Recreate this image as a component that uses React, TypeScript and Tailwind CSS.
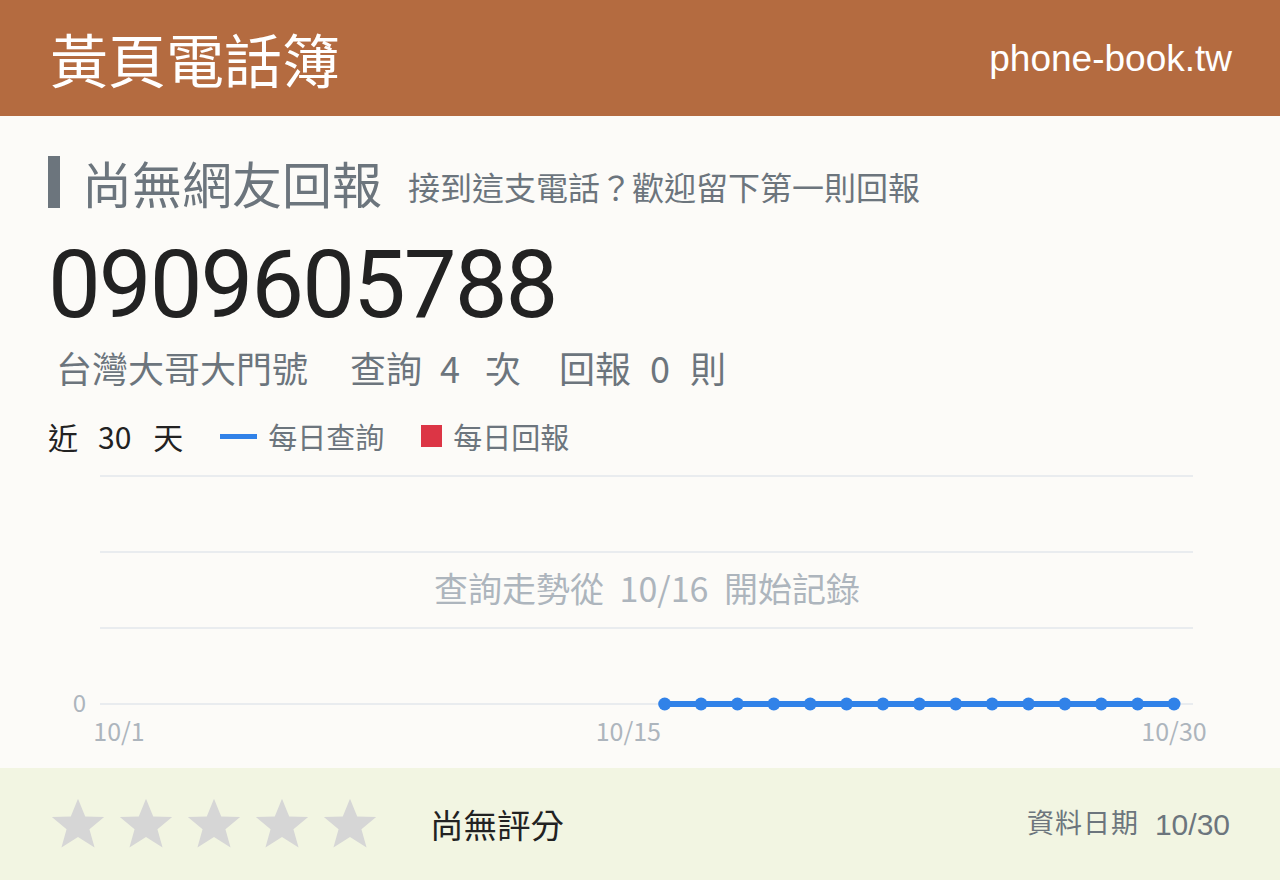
import React from 'react';

const CJK = "font-['Noto_Sans_CJK_TC',sans-serif]";

// days 10/16 .. 10/30, zero queries each
const points = Array.from({ length: 15 }, (_, i) => 16 + i);

function dayX(d: number) {
  return 71 + (d - 1) * 36.38;
}

function Star() {
  return (
    <svg viewBox="0 0 24 24" className="w-[56px] h-[56px]" fill="#d6d6d6">
      <path d="M12 1.2l3.1 7.6 8.1.2-6.3 5.2 2.2 7.9L12 17.6l-7.1 4.5 2.2-7.9L.8 9l8.1-.2z" />
    </svg>
  );
}

function TrendChart() {
  const grid = [16, 92, 168, 244];
  return (
    <svg width="1184" height="300" className="block">
      {grid.map((y) => (
        <line key={y} x1="52" x2="1145" y1={y} y2={y} stroke="#e9ecef" strokeWidth="2" />
      ))}
      <text x="38" y="252" textAnchor="end" fill="#adb5bd" fontSize="24" fontFamily="Noto Sans CJK TC, sans-serif">0</text>
      {[1, 15, 30].map((d) => (
        <text key={d} x={dayX(d)} y="281" textAnchor="middle" fill="#adb5bd" fontSize="25" fontFamily="Noto Sans CJK TC, sans-serif">
          10/{d}
        </text>
      ))}
      <text
        x="599"
        y="142"
        textAnchor="middle"
        fill="#adb5bd"
        fontSize="34"
        wordSpacing="8"
        fontFamily="Noto Sans CJK TC, sans-serif"
      >
        查詢走勢從 10/16 開始記錄
      </text>
      <polyline
        points={points.map((d) => `${dayX(d)},244`).join(' ')}
        fill="none"
        stroke="#3182e8"
        strokeWidth="6"
      />
      {points.map((d) => (
        <circle key={d} cx={dayX(d)} cy="244" r="6.5" fill="#3182e8" />
      ))}
    </svg>
  );
}

export default function App() {
  return (
    <div className={`w-[1280px] h-[880px] flex flex-col bg-[#fcfbf8] ${CJK}`}>
      <header className="h-[116px] shrink-0 bg-[#b46b40] flex items-center justify-between pl-[50px] pr-[48px]">
        <h1 className="text-[58px] leading-none text-white">黃頁電話簿</h1>
        <span className="text-[37px] leading-none text-white font-['Liberation_Sans',sans-serif]">phone-book.tw</span>
      </header>

      <main className="flex-1 px-[48px] pt-[40px]">
        <div className="flex items-end">
          <div className="w-[12px] h-[52px] bg-[#6c757d]" />
          <h2 className="ml-[22px] text-[50px] leading-[52px] text-[#6c757d]">尚無網友回報</h2>
          <p className="ml-[26px] mb-[2px] text-[32px] leading-[40px] text-[#6c757d]">接到這支電話？歡迎留下第一則回報</p>
        </div>

        <div className="mt-[21px] font-['Roboto',sans-serif] text-[94px] leading-[112px] text-[#222] tracking-[-2px]">
          0909605788
        </div>

        <div className="mt-[4px] ml-[8px] flex items-center text-[36px] leading-[44px] text-[#6c757d]">
          <span>台灣大哥大門號</span>
          <span className="ml-[42px]">查詢</span>
          <span className="ml-[18px]">4</span>
          <span className="ml-[25px]">次</span>
          <span className="ml-[38px]">回報</span>
          <span className="ml-[19px]">0</span>
          <span className="ml-[20px]">則</span>
        </div>

        <div className="mt-[27px] flex items-center text-[30px] leading-[40px]">
          <span className="text-[#222]">近</span>
          <span className="ml-[20px] text-[#222]">30</span>
          <span className="ml-[22px] text-[#222]">天</span>
          <span className="ml-[37px] w-[37px] h-[5px] bg-[#3182e8]" />
          <span className="ml-[11px] text-[29px] text-[#6c757d]">每日查詢</span>
          <span className="ml-[37px] w-[21px] h-[22px] bg-[#dc3545]" />
          <span className="ml-[11px] text-[29px] text-[#6c757d]">每日回報</span>
        </div>

        <div className="mt-[4px]">
          <TrendChart />
        </div>
      </main>

      <footer className="h-[112px] shrink-0 bg-[#f2f5e2] flex items-center px-[50px]">
        <div className="flex gap-[12px]">
          {[0, 1, 2, 3, 4].map((i) => (
            <Star key={i} />
          ))}
        </div>
        <span className="ml-[52px] text-[33.5px] text-[#222]">尚無評分</span>
        <span className="ml-auto text-[27px] text-[#6c757d] font-['Liberation_Sans','Noto_Sans_CJK_TC',sans-serif] flex items-center gap-[16px]">
          <span className="tracking-[1px]">資料日期</span>
          <span className="text-[30px]">10/30</span>
        </span>
      </footer>
    </div>
  );
}
